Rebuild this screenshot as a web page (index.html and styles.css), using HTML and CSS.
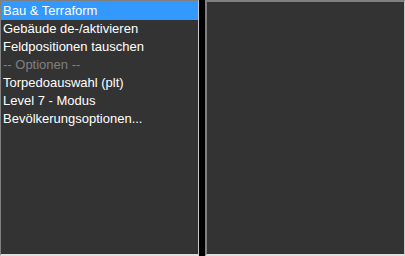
FILE: index.html
```html
<!DOCTYPE html>
<html>
<head>
<meta charset="utf-8">
<link rel="stylesheet" href="styles.css">
</head>
<body>
<div class="screen">
  <ul class="list">
    <li class="item selected">Bau &amp; Terraform</li>
    <li class="item">Gebäude de-/aktivieren</li>
    <li class="item">Feldpositionen tauschen</li>
    <li class="item disabled">-- Optionen --</li>
    <li class="item">Torpedoauswahl (plt)</li>
    <li class="item">Level 7 - Modus</li>
    <li class="item">Bevölkerungsoptionen...</li>
  </ul>
  <div class="pane"></div>
</div>
</body>
</html>
```
FILE: styles.css
```css
html, body {
  margin: 0;
  padding: 0;
  background: #000;
}
.screen {
  width: 405px;
  height: 256px;
  display: flex;
  gap: 6px;
  box-sizing: border-box;
}
.list {
  margin: 0;
  padding: 0;
  list-style: none;
  width: 199px;
  height: 256px;
  box-sizing: border-box;
  background: #333333;
  border-top: 1px solid #808080;
  border-left: 1px solid #808080;
  border-right: 1px solid #c8c8c8;
  border-bottom: 2px solid #e0e0e0;
  font-family: "Liberation Sans", Arial, sans-serif;
  font-size: 13px;
  color: #ffffff;
}
.item {
  height: 18px;
  line-height: 18px;
  padding-left: 2px;
  white-space: nowrap;
}
.item.selected {
  background: #3399ff;
  height: 19px;
  line-height: 19px;
}
.item.disabled {
  color: #808080;
}
.pane {
  width: 200px;
  height: 256px;
  box-sizing: border-box;
  background: #333333;
  border-top: 2px solid #808080;
  border-left: 2px solid #808080;
  border-right: 1px solid #c8c8c8;
  border-bottom: 2px solid #e0e0e0;
}
```
